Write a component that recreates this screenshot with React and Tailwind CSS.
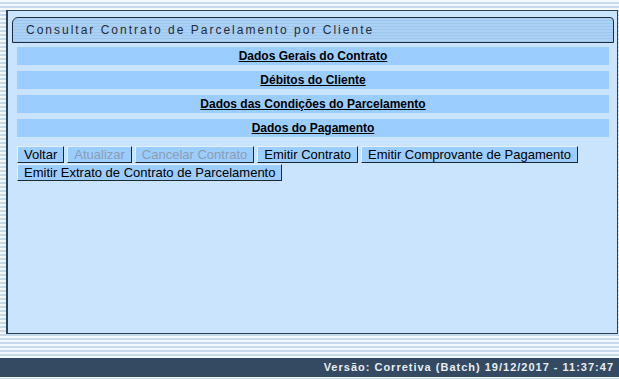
import React from 'react';

const stripes =
  'bg-[repeating-linear-gradient(to_bottom,#f3f8fd_0px,#f3f8fd_2px,#c6d9ea_2px,#c6d9ea_4px)]';

const sections = [
  'Dados Gerais do Contrato',
  'Débitos do Cliente',
  'Dados das Condições do Parcelamento',
  'Dados do Pagamento',
];

const buttons = [
  { label: 'Voltar' },
  { label: 'Atualizar', disabled: true },
  { label: 'Cancelar Contrato', disabled: true },
  { label: 'Emitir Contrato' },
  { label: 'Emitir Comprovante de Pagamento' },
  { label: 'Emitir Extrato de Contrato de Parcelamento' },
];

const App = () => {
  return (
    <div
      className={`w-[619px] h-[379px] overflow-hidden flex flex-col ${stripes}`}
      style={{ fontFamily: '"Liberation Sans", Arial, sans-serif' }}
    >
      <div className="h-[10px] shrink-0" />

      <div className="ml-[6px] w-[612px] h-[324px] shrink-0 border border-l-2 border-[#2d4156] bg-[#cae4fd] pl-[4px] pr-[3px] pt-[6px]">
        <div className="w-[602px] h-[26px] flex items-center pl-[13px] border border-[#1d2c3b] rounded-tl-[6px] rounded-tr-[4px] bg-[repeating-linear-gradient(to_bottom,#abd1f6_0px,#abd1f6_2px,#9ec5ec_2px,#9ec5ec_3px)]">
          <span className="text-[12px] tracking-[2px] text-[#1f2c39]">
            Consultar Contrato de Parcelamento por Cliente
          </span>
        </div>

        <div className="mx-[5px] mt-[4px] flex flex-col gap-[6px]">
          {sections.map((s, i) => (
            <div
              key={i}
              className="h-[18px] bg-[#9ccdff] flex items-center justify-center"
            >
              <a className="text-[12px] font-bold underline text-black cursor-pointer">
                {s}
              </a>
            </div>
          ))}
        </div>

        <div className="mx-[5px] mt-[9px] flex flex-wrap gap-x-[3px] gap-y-[1px]">
          {buttons.map((b, i) => (
            <button
              key={i}
              disabled={b.disabled}
              className={`h-[17px] px-[6px] text-[13px] leading-none bg-[#9ccdff] border border-t-[#e4f0fb] border-l-[#e4f0fb] border-b-[#1b2836] border-r-[#1b2836] ${
                b.disabled ? 'text-[#8b9db0]' : 'text-black'
              }`}
            >
              {b.label}
            </button>
          ))}
        </div>
      </div>

      <div className="h-[24px] shrink-0" />

      <div className="h-[19px] shrink-0 bg-[#334a62] flex items-center justify-end pr-[5px]">
        <span className="text-[11px] font-bold tracking-[1px] text-[#e8eef4]">
          Versão: Corretiva (Batch) 19/12/2017 - 11:37:47
        </span>
      </div>
    </div>
  );
};

export default App;
